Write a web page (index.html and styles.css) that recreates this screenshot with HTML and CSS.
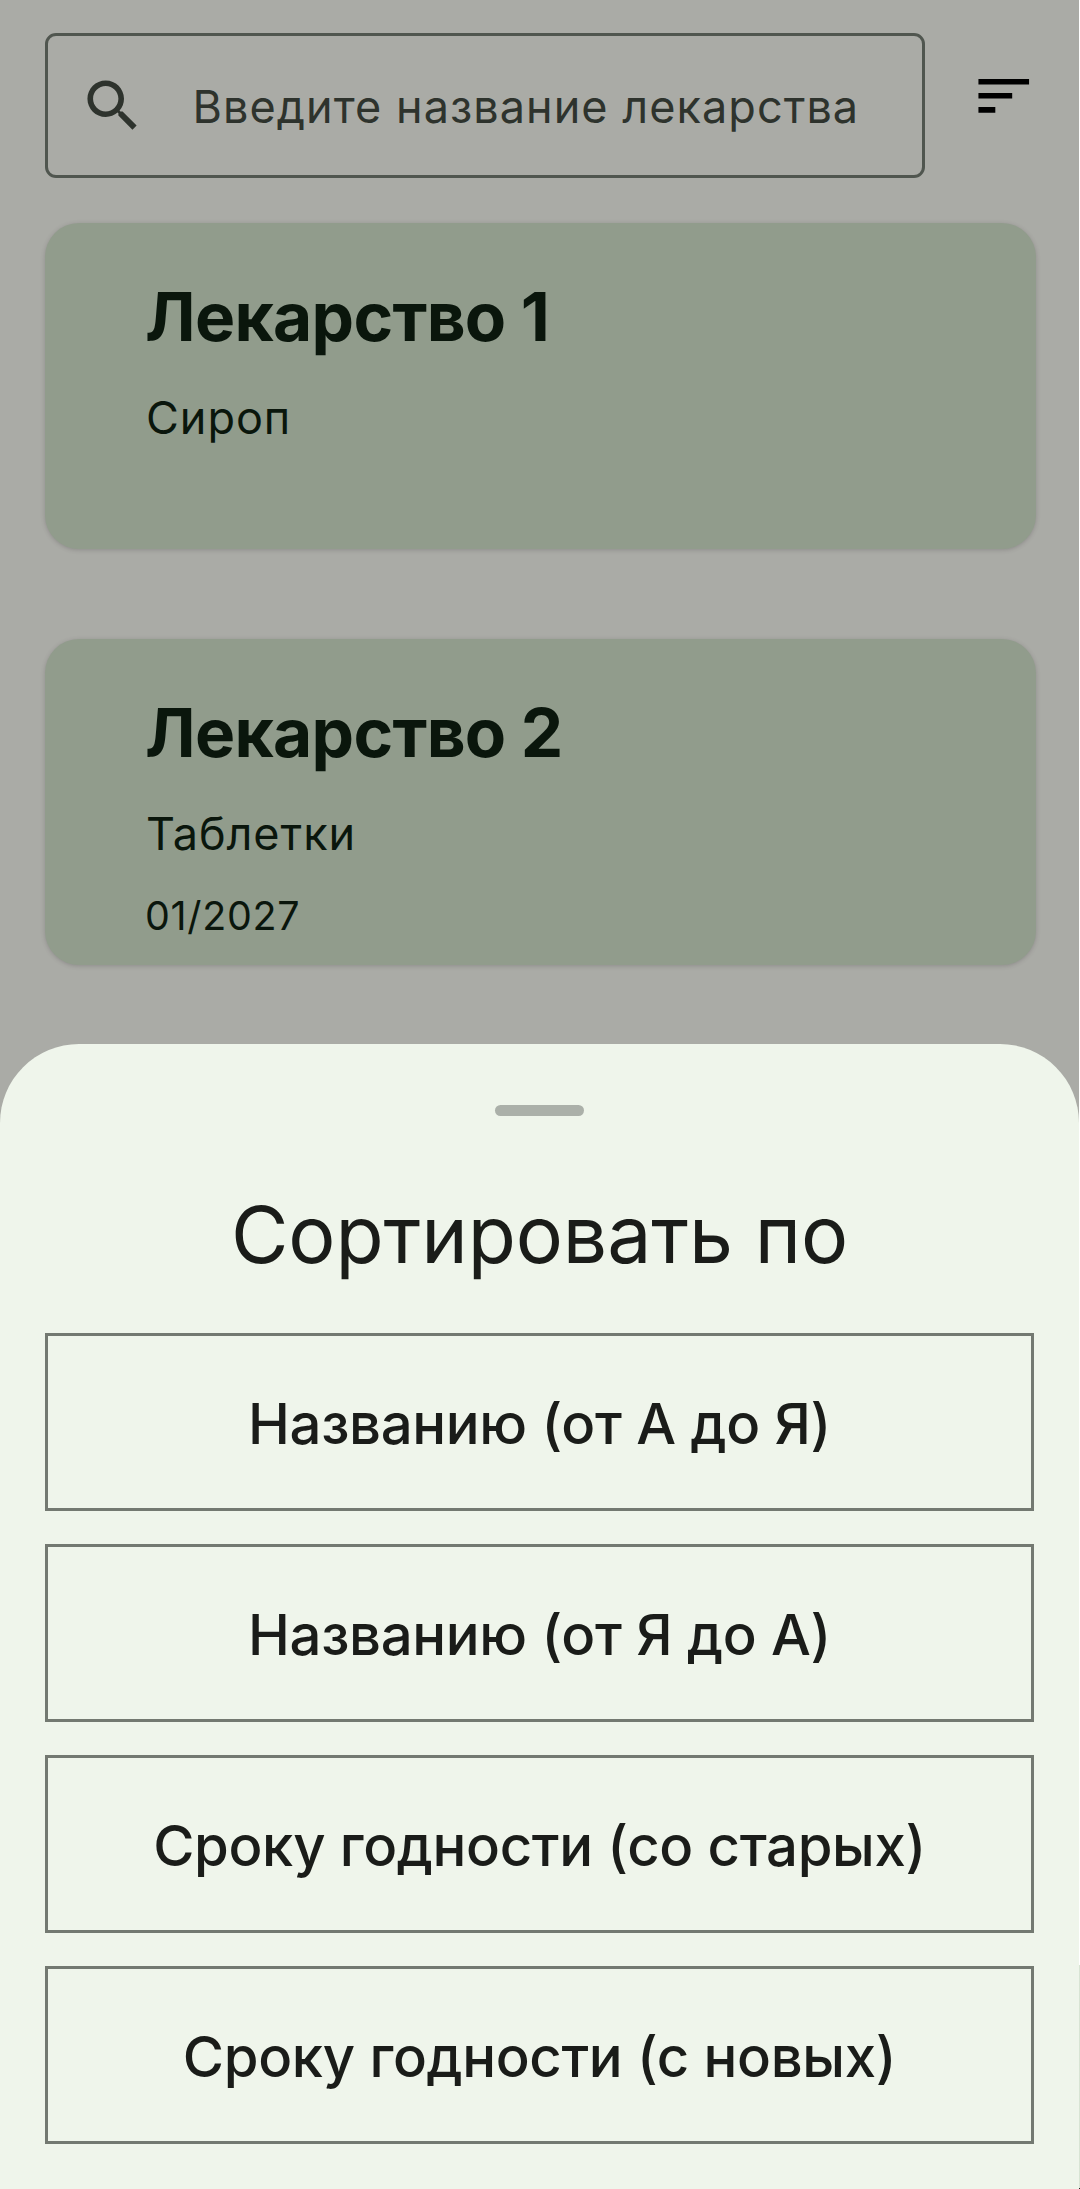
FILE: index.html
```html
<!DOCTYPE html>
<html lang="ru">
<head>
<meta charset="utf-8">
<title>Лекарства</title>
<link rel="stylesheet" href="styles.css">
</head>
<body>
<div class="screen">
  <header class="toolbar">
    <div class="search">
      <svg class="icon" viewBox="0 0 24 24"><path fill="#2e332d" d="M15.5 14h-.79l-.28-.27C15.41 12.59 16 11.11 16 9.5 16 5.91 13.09 3 9.5 3S3 5.91 3 9.5 5.91 16 9.5 16c1.61 0 3.09-.59 4.23-1.57l.27.28v.79l5 4.99L20.49 19l-4.99-5zm-6 0C7.01 14 5 11.99 5 9.5S7.01 5 9.5 5 14 7.01 14 9.5 11.99 14 9.5 14z"/></svg>
      <span class="placeholder">Введите название лекарства</span>
    </div>
    <svg class="icon sort" viewBox="0 0 24 24"><path d="M3 18h6v-2H3v2zM3 6v2h18V6H3zm0 7h12v-2H3v2z"/></svg>
  </header>
  <main class="list">
    <article class="card">
      <h2 class="name">Лекарство 1</h2>
      <p class="form">Сироп</p>
    </article>
    <article class="card">
      <h2 class="name">Лекарство 2</h2>
      <p class="form">Таблетки</p>
      <p class="date">01/2027</p>
    </article>
  </main>
  <section class="sheet">
    <div class="handle"></div>
    <h1 class="title">Сортировать по</h1>
    <div class="options">
      <button class="option">Названию (от А до Я)</button>
      <button class="option">Названию (от Я до А)</button>
      <button class="option">Сроку годности (со старых)</button>
      <button class="option">Сроку годности (с новых)</button>
    </div>
  </section>
  <div class="edge"></div>
</div>
</body>
</html>
```
FILE: styles.css
```css
* { box-sizing: border-box; margin: 0; }
body { font-family: Inter, "Noto Sans", sans-serif; background: #aaaba6; }
.screen {
  position: relative;
  width: 1080px;
  height: 2189px;
  overflow: hidden;
  display: flex;
  flex-direction: column;
  background: #aaaba6;
}
.toolbar {
  display: flex;
  align-items: flex-start;
  height: 223px;
  padding: 33px 43px 0 45px;
  justify-content: space-between;
}
.search {
  display: flex;
  align-items: center;
  width: 880px;
  height: 145px;
  padding-left: 31px;
  gap: 46px;
  border: 3px solid #50564f;
  border-radius: 11px;
}
.icon { width: 67.5px; height: 67.5px; flex: none; display: block; }
.sort { margin-top: 29px; }
.placeholder {
  padding-top: 2px;
  font-size: 45px;
  line-height: 68px;
  letter-spacing: 1.05px;
  color: #2e332d;
  white-space: nowrap;
}
.list { display: flex; flex-direction: column; gap: 90px; height: 821px; padding: 0 44px 0 45px; }
.card {
  flex: none;
  height: 326px;
  padding: 49px 100px 0;
  border-radius: 34px;
  background: #919c8c;
  color: #0a160c;
  box-shadow: 0 1px 4px rgba(60, 50, 60, .25);
}
.name { font-size: 67.5px; line-height: 90px; font-weight: 700; letter-spacing: -.7px; }
.form { margin-top: 22px; padding-left: 1px; font-size: 45px; line-height: 68px; letter-spacing: .95px; }
.date { margin-top: 20px; font-size: 39.4px; line-height: 56px; letter-spacing: .7px; }
.sheet {
  flex: 1;
  width: 1079px;
  padding: 61px 45px 0;
  border-radius: 79px 79px 0 0;
  background: #eff5eb;
  color: #1a1c19;
}
.handle { width: 89px; height: 11px; margin: 0 auto; border-radius: 6px; background: #abb0a9; }
.title {
  margin-top: 68px;
  height: 149px;
  font-size: 78.75px;
  line-height: 101px;
  font-weight: 400;
  letter-spacing: -.15px;
  text-align: center;
}
.options { display: flex; flex-direction: column; gap: 33px; }
.option {
  height: 178px;
  padding: 4px 0 0;
  border: 3px solid #737971;
  background: transparent;
  font: 500 56.25px/84px Inter, "Noto Sans", sans-serif;
  letter-spacing: -.35px;
  color: inherit;
}
.edge {
  position: absolute;
  top: 0;
  right: 0;
  width: 1px;
  height: 100%;
  background: linear-gradient(#fff 1965px, #d8e4d4 1965px 2188px, #222 2188px);
}
```
